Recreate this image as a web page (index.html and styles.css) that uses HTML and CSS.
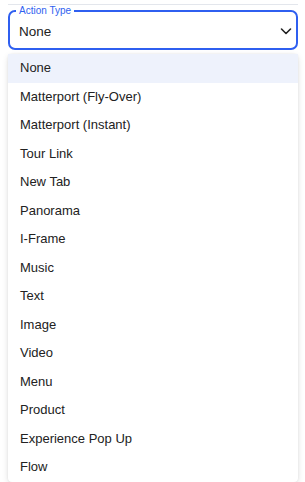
FILE: index.html
```html
<!DOCTYPE html>
<html>

<head>
  <title>Action Type</title>
  <link rel="stylesheet" href="styles.css">
</head>

<body>
  <div class="page">
    <div class="topline"></div>

    <div class="field">
      <fieldset class="outline">
        <legend>Action Type</legend>
      </fieldset>
      <div class="value">None</div>
      <svg class="chevron" width="14" height="14" viewBox="0 0 14 14">
        <path d="M2.5 5 L7 9.5 L11.5 5" fill="none" stroke="#222" stroke-width="1.6" stroke-linecap="round" stroke-linejoin="round" />
      </svg>
    </div>

    <ul class="menu">
      <li class="selected">None</li>
      <li>Matterport (Fly-Over)</li>
      <li>Matterport (Instant)</li>
      <li>Tour Link</li>
      <li>New Tab</li>
      <li>Panorama</li>
      <li>I-Frame</li>
      <li>Music</li>
      <li>Text</li>
      <li>Image</li>
      <li>Video</li>
      <li>Menu</li>
      <li>Product</li>
      <li>Experience Pop Up</li>
      <li>Flow</li>
    </ul>
  </div>
</body>

</html>
```

FILE: styles.css
```css
body {
  margin: 0;
  background: #fff;
  font-family: "Liberation Sans", Arial, sans-serif;
  color: #222;
  overflow: hidden;
}

.page {
  padding: 4px 7px 0 8px;
}

.topline {
  height: 1px;
  background: #e3e6ec;
}

.field {
  position: relative;
  height: 39px;
  margin-top: 6px;
  display: flex;
  align-items: center;
  padding: 0 5px 0 11px;
}

.outline {
  position: absolute;
  top: -6px;
  left: 0;
  right: 0;
  bottom: 0;
  margin: 0;
  padding: 0 6px;
  border: 2px solid #2f5ff0;
  border-radius: 7px;
  pointer-events: none;
}

.outline legend {
  padding: 0 3px;
  font-size: 10px;
  line-height: 11px;
  color: #2f5ff0;
}

.value {
  flex-grow: 1;
  font-size: 13.5px;
  padding-top: 2px;
}

.chevron {
  display: block;
}

.menu {
  list-style-type: none;
  margin: 4px 0 0 0;
  padding: 0;
  background: #fff;
  border-radius: 4px;
  box-shadow: 0 2px 6px rgba(0, 0, 0, 0.12), 0 0 2px rgba(0, 0, 0, 0.08);
}

.menu li {
  height: 28.5px;
  line-height: 28.5px;
  padding: 0 12px;
  font-size: 13px;
}

.menu li.selected {
  background: #eef2fc;
}
```
